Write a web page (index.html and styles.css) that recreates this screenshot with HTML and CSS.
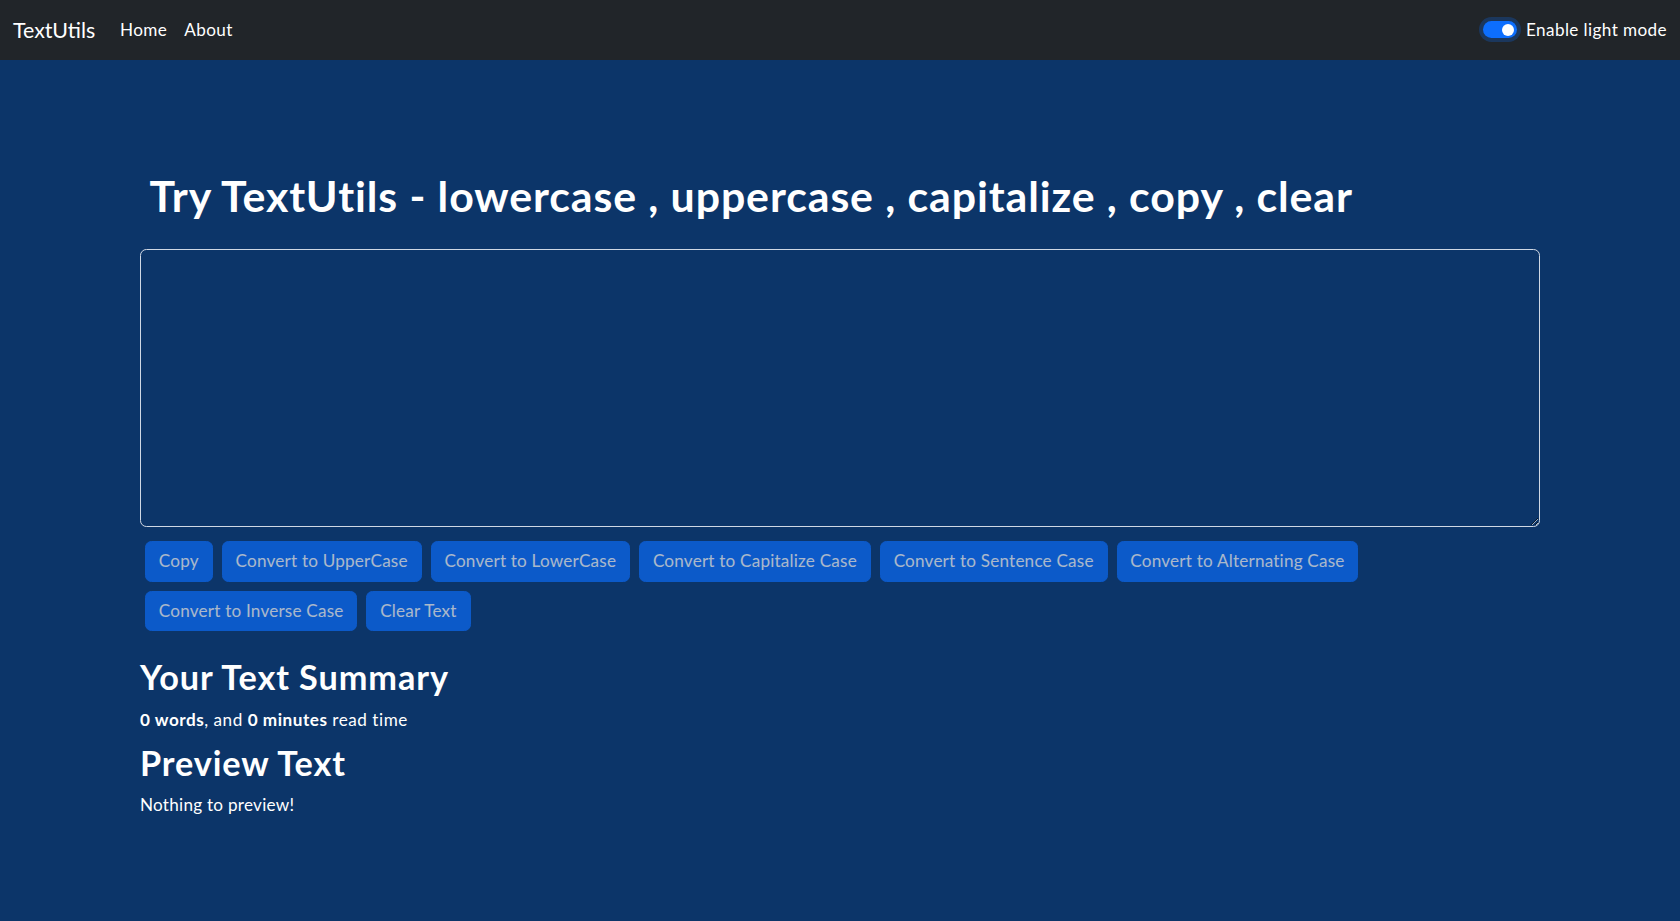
FILE: index.html
```html
<!DOCTYPE html>
<html lang="en">
<head>
<meta charset="utf-8">
<title>TextUtils</title>
<link rel="stylesheet" href="styles.css">
</head>
<body>
<nav class="navbar">
  <div class="nav-left">
    <a class="brand" href="#">TextUtils</a>
    <ul class="nav-links">
      <li><a href="#">Home</a></li>
      <li><a href="#">About</a></li>
    </ul>
  </div>
  <label class="mode-switch">
    <span class="switch"><span class="knob"></span></span>
    <span class="switch-label">Enable light mode</span>
  </label>
</nav>
<main class="main">
  <h1 class="title">Try TextUtils - lowercase , uppercase , capitalize , copy , clear</h1>
  <textarea class="text-box" aria-label="Text"></textarea>
  <div class="actions">
    <div class="action-row">
      <button class="btn" disabled>Copy</button>
      <button class="btn" disabled>Convert to UpperCase</button>
      <button class="btn" disabled>Convert to LowerCase</button>
      <button class="btn" disabled>Convert to Capitalize Case</button>
      <button class="btn" disabled>Convert to Sentence Case</button>
      <button class="btn" disabled>Convert to Alternating Case</button>
    </div>
    <div class="action-row">
      <button class="btn" disabled>Convert to Inverse Case</button>
      <button class="btn" disabled>Clear Text</button>
    </div>
  </div>
  <section class="summary">
    <h2 class="sub-title">Your Text Summary</h2>
    <p class="stats"><b>0 words</b>, and <b>0 minutes</b> read time</p>
    <h2 class="sub-title">Preview Text</h2>
    <p class="preview">Nothing to preview!</p>
  </section>
</main>
</body>
</html>
```
FILE: styles.css
```css
* { box-sizing: border-box; }
html, body { margin: 0; padding: 0; }
body {
  background: #0c3569;
  color: #ffffff;
  font-family: "Lato", "Liberation Sans", sans-serif;
  font-size: 17.14px;
  line-height: 25.7px;
  letter-spacing: 0.25px;
  min-height: 921px;
}
.navbar {
  background: #212529;
  height: 60px;
  display: flex;
  align-items: center;
  justify-content: space-between;
  padding: 0 13px;
}
.nav-left { display: flex; align-items: center; }
.brand {
  color: #fff;
  text-decoration: none;
  font-size: 21.4px;
  line-height: 32px;
  letter-spacing: 0;
  margin-right: 16px;
}
.nav-links { display: flex; list-style: none; margin: 0; padding: 0; }
.nav-links a {
  display: block;
  color: #fff;
  text-decoration: none;
  padding: 0 8.57px;
  font-size: 17.14px;
  letter-spacing: 0.4px;
}
.mode-switch { display: flex; align-items: center; gap: 9px; }
.switch {
  position: relative;
  width: 34px;
  height: 17px;
  border-radius: 9px;
  background: #0d6efd;
  box-shadow: 0 0 0 4px rgba(13, 110, 253, 0.25);
}
.knob {
  position: absolute;
  right: 3px;
  top: 2.5px;
  width: 12px;
  height: 12px;
  border-radius: 50%;
  background: #fff;
}
.switch-label { font-size: 17.14px; letter-spacing: 0.4px; }
.main {
  width: 1400px;
  margin: 0 auto;
  padding-top: 110px;
}
.title {
  font-size: 42.86px;
  line-height: 51.4px;
  font-weight: 700;
  letter-spacing: 0.9px;
  margin: 0 0 27.6px 0;
  padding-left: 9.5px;
}
.text-box {
  display: block;
  width: 1400px;
  height: 278px;
  background: #0c3569;
  color: #fff;
  border: 1px solid #d0d8e4;
  border-radius: 6.4px;
  padding: 6.4px 12.8px;
  font: inherit;
  resize: vertical;
}
.actions {
  margin-top: 14px;
  padding-left: 5px;
  display: flex;
  flex-direction: column;
  gap: 9px;
}
.action-row { display: flex; gap: 9px; }
.btn {
  font: inherit;
  line-height: 25.7px;
  letter-spacing: 0.2px;
  color: #fff;
  background: #0d6efd;
  border: 1px solid #0d6efd;
  border-radius: 6.4px;
  padding: 6.43px 12.86px;
  opacity: 0.65;
}
.summary { margin-top: 25px; }
.sub-title {
  font-size: 34.28px;
  line-height: 41.1px;
  font-weight: 700;
  letter-spacing: 0.9px;
  margin: 0 0 9.5px 0;
}
.stats { margin: 0 0 9.5px 0; letter-spacing: 0.52px; }
.stats b { font-weight: 700; }
.preview { margin: 1px 0 0 0; }
```
